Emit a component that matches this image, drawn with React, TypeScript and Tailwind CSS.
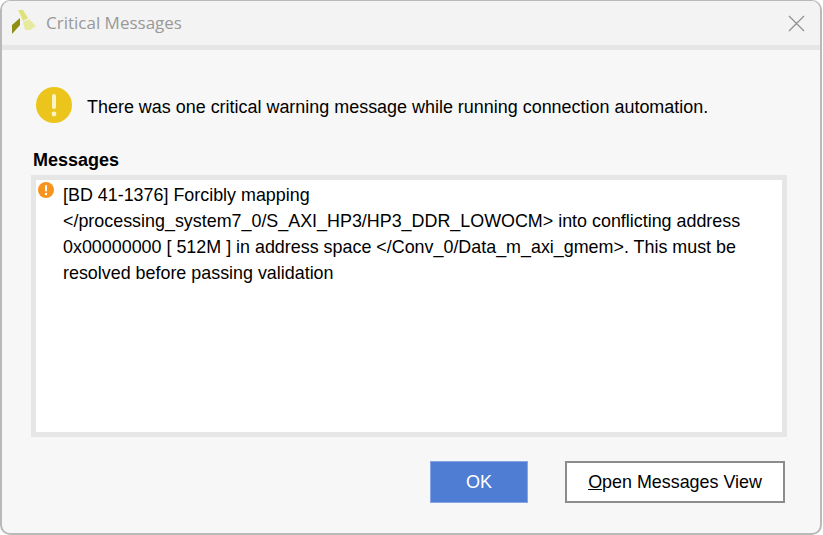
import React from 'react'

const XilinxLogo = () => (
  <svg width="26" height="26" viewBox="0 0 26 26">
    <polygon points="6,0 11,0 16,8 11,11 9,6" fill="#dfe27a" />
    <polygon points="11,12 17,9 24,16 18,20 13,20" fill="#e6ea9e" />
    <polygon points="0,15 8,8 8,15 0,24" fill="#8f8f14" />
  </svg>
)

const App: React.FC = () => {
  return (
    <div className="w-[823px] h-[535px] bg-white overflow-hidden font-['Liberation_Sans',Arial,sans-serif]">
      <div className="w-[822px] h-[535px] flex flex-col bg-[#f7f7f7] rounded-[10px] border-2 border-t border-[#b9b9b9] overflow-hidden">
        {/* Title bar */}
        <div className="h-[44px] shrink-0 flex items-center justify-between bg-[#f3f3f3] pl-[10px] pr-[15px]">
          <div className="flex items-center gap-[8px]">
            <XilinxLogo />
            <span className="text-[17px] text-[#999999] font-['Open_Sans',sans-serif]">Critical Messages</span>
          </div>
          <svg width="17" height="17" viewBox="0 0 17 17" stroke="#8f8f8f" strokeWidth="1.2" fill="none">
            <path d="M1 1 L16 16 M16 1 L1 16" />
          </svg>
        </div>
        <div className="h-[5px] shrink-0 bg-[#e6e6e6]" />

        {/* Summary */}
        <div className="flex items-center gap-[15px] pl-[34px] pt-[37px]">
          <svg width="36" height="36" viewBox="0 0 36 36">
            <circle cx="18" cy="18" r="18" fill="#ecc51c" />
            <rect x="16" y="7" width="4" height="15" rx="2" fill="#fbf3c8" />
            <circle cx="18" cy="27" r="2.4" fill="#fbf3c8" />
          </svg>
          <span className="mt-[4px] text-[17.95px] leading-[22px] text-black">
            There was one critical warning message while running connection automation.
          </span>
        </div>

        {/* Messages */}
        <div className="mt-[26px] pl-[31px] text-[18px] leading-[22px] font-bold text-black">Messages</div>
        <div className="mt-[4px] ml-[29px] w-[756px] h-[262px] border-[5px] border-[#e6e6e6] bg-white flex items-start">
          <svg className="mt-[2px] ml-[2px] shrink-0" width="16" height="16" viewBox="0 0 16 16">
            <circle cx="8" cy="8" r="8" fill="#f7941d" />
            <rect x="7" y="3" width="2" height="6.5" rx="1" fill="#ffffff" />
            <circle cx="8" cy="12" r="1.2" fill="#ffffff" />
          </svg>
          <p className="ml-[9px] mt-[2px] w-[700px] text-[17.9px] leading-[26px] text-black">
            [BD 41-1376] Forcibly mapping
            <br />
            &lt;/processing_system7_0/S_AXI_HP3/HP3_DDR_LOWOCM&gt; into conflicting address
            <br />
            0x00000000 [ 512M ] in address space &lt;/Conv_0/Data_m_axi_gmem&gt;. This must be
            <br />
            resolved before passing validation
          </p>
        </div>

        {/* Actions */}
        <div className="flex justify-end gap-[37px] mt-[24px] pr-[35px]">
          <button className="w-[98px] h-[42px] bg-[#4f7dd3] border border-[#86a5e2] text-white text-[18px]">OK</button>
          <button className="w-[220px] h-[42px] bg-white border-2 border-[#8c8c8c] text-black text-[17.9px]">
            <span className="underline">O</span>pen Messages View
          </button>
        </div>
      </div>
    </div>
  )
}

export default App
